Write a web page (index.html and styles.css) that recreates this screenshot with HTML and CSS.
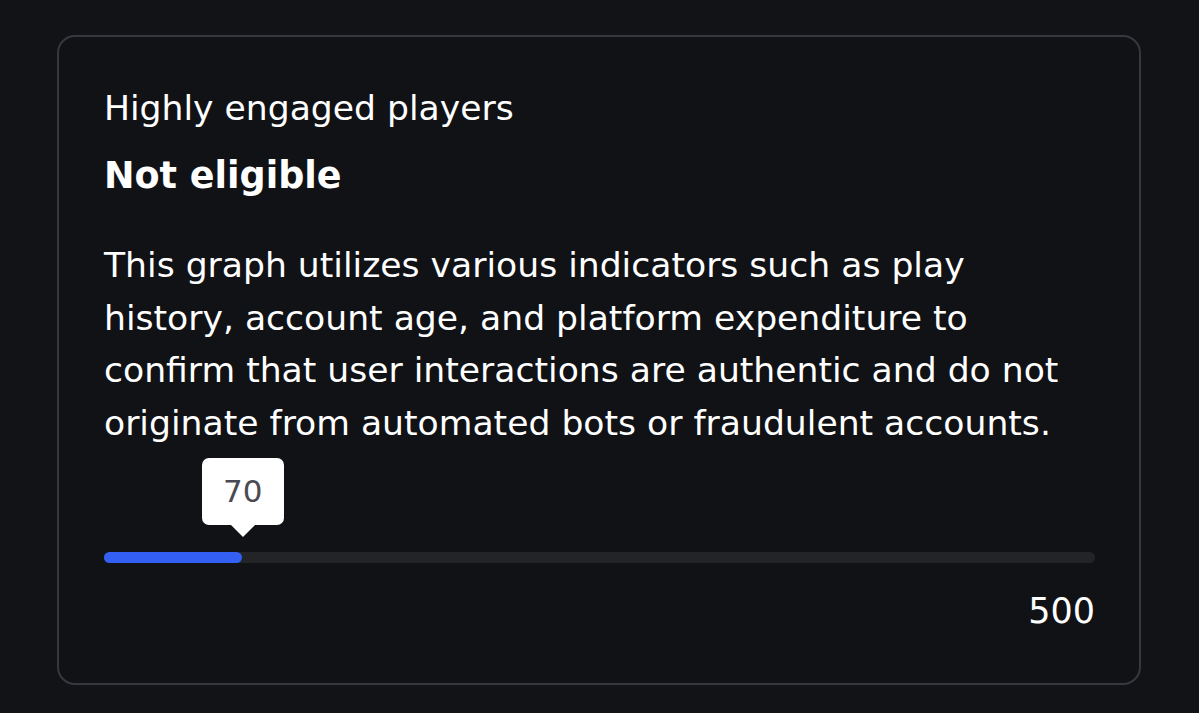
FILE: index.html
```html
<!DOCTYPE html>
<html>
<head>
<meta charset="utf-8">
<link rel="stylesheet" href="styles.css">
</head>
<body>
<div class="card">
  <div class="label">Highly engaged players</div>
  <div class="status">Not eligible</div>
  <p class="desc">This graph utilizes various indicators such as play history, account age, and platform expenditure to confirm that user interactions are authentic and do not originate from automated bots or fraudulent accounts.</p>
  <div class="meter">
    <div class="track">
      <div class="fill" style="width:13.9%">
        <div class="tip">70</div>
      </div>
    </div>
    <div class="max">500</div>
  </div>
</div>
</body>
</html>
```

FILE: styles.css
```css
html, body {
  margin: 0;
  padding: 0;
  background: #121317;
}
body {
  padding: 35px 58px 28px 57px;
  font-family: "DejaVu Sans", "Open Sans", sans-serif;
  color: #ffffff;
}
.card {
  box-sizing: border-box;
  width: 1084px;
  height: 650px;
  border: 2px solid #37383d;
  border-radius: 18px;
  background: #111216;
  padding: 49px 44px 0 45px;
}
.label {
  font-size: 34.6px;
  line-height: 44px;
}
.status {
  margin-top: 24px;
  font-size: 36.5px;
  font-weight: 700;
  line-height: 44px;
}
.desc {
  margin: 41px 0 0 0;
  font-size: 34.6px;
  line-height: 52.5px;
}
.meter {
  margin-top: 103px;
}
.track {
  height: 11px;
  border-radius: 6px;
  background: #232428;
  position: relative;
}
.fill {
  height: 100%;
  border-radius: 6px;
  background: #3360f2;
  position: relative;
}
.tip {
  position: absolute;
  right: -42px;
  bottom: 38px;
  width: 82px;
  height: 67px;
  background: #ffffff;
  border-radius: 7px;
  color: #4a4b52;
  font-size: 31px;
  line-height: 67px;
  text-align: center;
}
.tip::after {
  content: "";
  position: absolute;
  left: 50%;
  bottom: -12px;
  margin-left: -12px;
  border-left: 12px solid transparent;
  border-right: 12px solid transparent;
  border-top: 12px solid #ffffff;
}
.max {
  text-align: right;
  font-size: 35px;
  line-height: 44px;
  margin-top: 26px;
}
```
